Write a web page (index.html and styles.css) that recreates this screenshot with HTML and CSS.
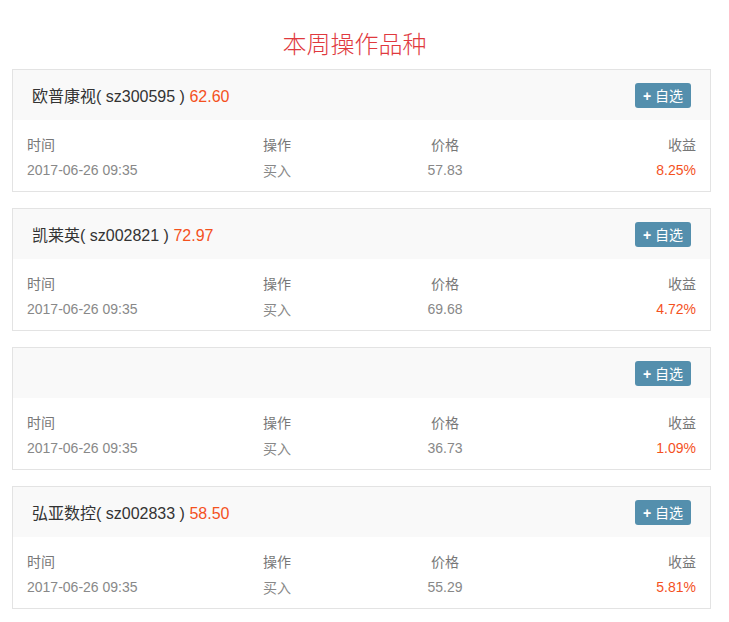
FILE: index.html
```html
<!DOCTYPE html>
<html lang="zh-CN">
<head>
<meta charset="UTF-8" />
<meta name="viewport" content="width=device-width, initial-scale=1" />
<title>本周操作品种</title>
<link rel="stylesheet" href="styles.css">
</head>
<body>

<h2 class="title">本周操作品种</h2>

<div class="card">
  <div class="card-head">
    <span class="name">欧普康视( sz300595 ) <span class="up">62.60</span></span>
    <button class="add"><b>+</b> 自选</button>
  </div>
  <div class="card-body">
    <span class="label">时间</span><span class="label">操作</span><span class="label mid">价格</span><span class="label end">收益</span>
    <span>2017-06-26 09:35</span><span>买入</span><span class="mid">57.83</span><span class="end up">8.25%</span>
  </div>
</div>

<div class="card">
  <div class="card-head">
    <span class="name">凯莱英( sz002821 ) <span class="up">72.97</span></span>
    <button class="add"><b>+</b> 自选</button>
  </div>
  <div class="card-body">
    <span class="label">时间</span><span class="label">操作</span><span class="label mid">价格</span><span class="label end">收益</span>
    <span>2017-06-26 09:35</span><span>买入</span><span class="mid">69.68</span><span class="end up">4.72%</span>
  </div>
</div>

<div class="card">
  <div class="card-head">
    <span class="name"></span>
    <button class="add"><b>+</b> 自选</button>
  </div>
  <div class="card-body">
    <span class="label">时间</span><span class="label">操作</span><span class="label mid">价格</span><span class="label end">收益</span>
    <span>2017-06-26 09:35</span><span>买入</span><span class="mid">36.73</span><span class="end up">1.09%</span>
  </div>
</div>

<div class="card">
  <div class="card-head">
    <span class="name">弘亚数控( sz002833 ) <span class="up">58.50</span></span>
    <button class="add"><b>+</b> 自选</button>
  </div>
  <div class="card-body">
    <span class="label">时间</span><span class="label">操作</span><span class="label mid">价格</span><span class="label end">收益</span>
    <span>2017-06-26 09:35</span><span>买入</span><span class="mid">55.29</span><span class="end up">5.81%</span>
  </div>
</div>

</body>
</html>
```

FILE: styles.css
```css
body {
  font-family: "Liberation Sans", "Noto Sans CJK SC", sans-serif;
  margin: 0;
  padding: 0 18px 0 12px;
  background: #fff;
  color: #333;
}
.title {
  margin: 28px 0 7px;
  padding-right: 14px;
  line-height: 34px;
  font-size: 24px;
  font-weight: 300;
  text-align: center;
  color: #e0393e;
}
.card {
  border: 1px solid #e3e3e3;
  margin-bottom: 16px;
}
.card-head {
  display: flex;
  align-items: center;
  justify-content: space-between;
  height: 50px;
  padding: 0 19px 0 19px;
  background: #f9f9f9;
}
.name {
  font-size: 16px;
  color: #333;
}
.up {
  color: #f4511e;
}
.add {
  height: 25px;
  padding: 0 8px;
  border: none;
  border-radius: 3px;
  background: #548fad;
  color: #fff;
  font-family: inherit;
  font-size: 14px;
  cursor: pointer;
}
.card-body {
  display: grid;
  grid-template-columns: 236px 100px 164px 1fr;
  grid-auto-rows: 26px;
  align-items: center;
  padding: 11px 14px 8px 14px;
  font-size: 14px;
  color: #888;
}
.label {
  color: #777;
}
.mid {
  text-align: center;
}
.end {
  text-align: right;
}
.end.up {
  color: #f4511e;
}
```
